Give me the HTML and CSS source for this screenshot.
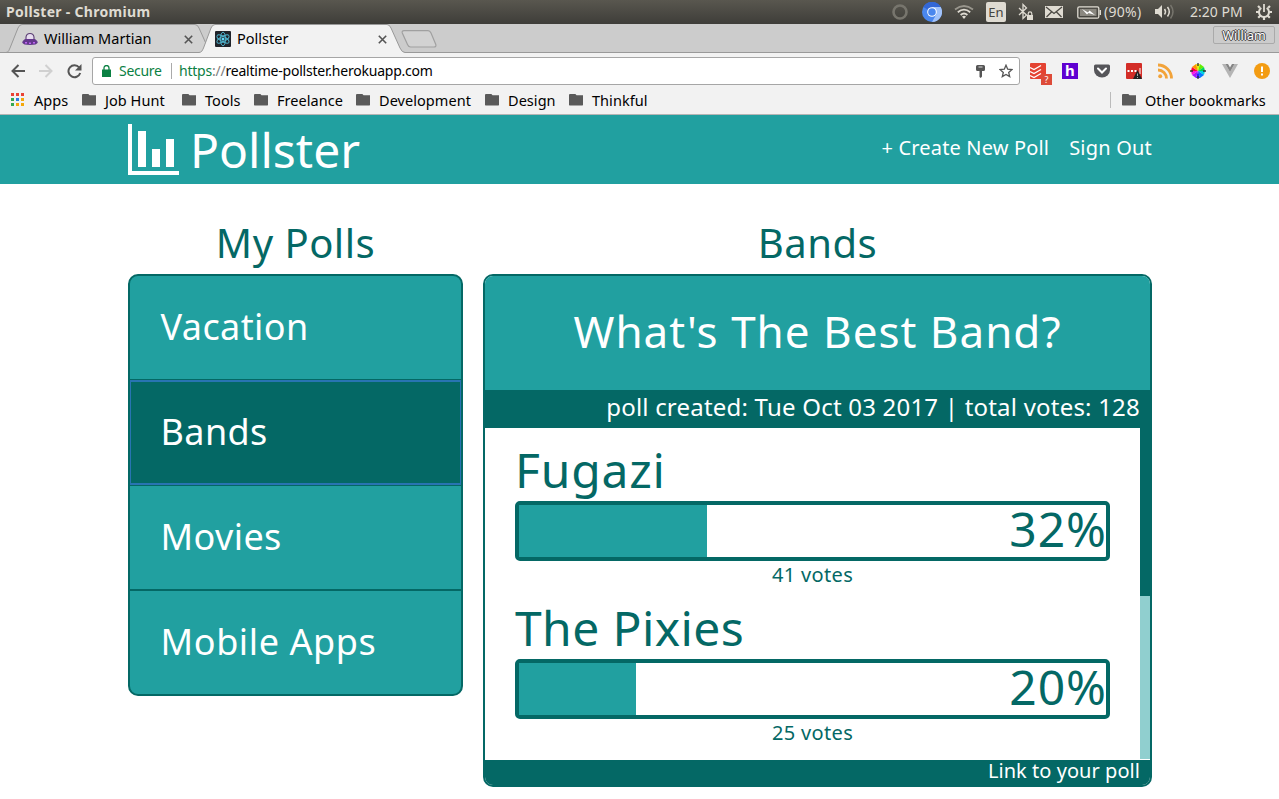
FILE: index.html
```html
<!DOCTYPE html>
<html lang="en">
<head>
<meta charset="utf-8">
<title>Pollster</title>
<link rel="stylesheet" href="styles.css">
</head>
<body>
<div class="titlebar">
  <span class="window-title">Pollster - Chromium</span>
  <div class="status">
    <svg width="16" height="16" viewBox="0 0 16 16"><circle cx="8" cy="8" r="6.5" fill="none" stroke="#77756d" stroke-width="2.6"/></svg>
    <svg width="20" height="20" viewBox="0 0 20 20"><circle cx="10" cy="10" r="10" fill="#4a87ee"/><path d="M10 10 1.3 5A10 10 0 0 1 18.7 5Z" fill="#3367d6"/><path d="M10 5h8.7A10 10 0 0 1 10 20l4.3-7.5Z" fill="#a1c2fa"/><circle cx="10" cy="10" r="4.8" fill="#fff"/><circle cx="10" cy="10" r="3.8" fill="#4a87ee"/></svg>
    <svg width="20" height="16" viewBox="0 0 20 16" fill="none" stroke="#dfdbd2" stroke-width="1.8"><path d="M1 5.5Q10-1.5 19 5.5" stroke="#99968d"/><path d="M3.8 8.3Q10 3 16.2 8.3"/><path d="M6.6 11Q10 8 13.4 11"/><path d="m8 12.5 2 2.5 2-2.5Q10 11 8 12.5Z" fill="#dfdbd2" stroke="none"/></svg>
    <span class="lang">En</span>
    <svg width="16" height="18" viewBox="0 0 16 18"><path d="m1 5 7.500 7L5 15.500V1.500L8.500 5 1 12" fill="none" stroke="#dfdbd2" stroke-width="1.300"/><path d="M9 12h6v5H9z" fill="#dfdbd2"/><path d="M10.200 12v-1.300a1.800 1.800 0 0 1 3.600 0V12" fill="none" stroke="#dfdbd2" stroke-width="1.200"/></svg>
    <svg width="18" height="12" viewBox="0 0 18 12"><path d="M0 0h18v12H0z" fill="#dfdbd2"/><path d="m1 1 8 6.500L17 1M1.500 11l5-5M16.500 11l-5-5" fill="none" stroke="#4b4943" stroke-width="1.300"/></svg>
    <svg width="25" height="13" viewBox="0 0 25 13"><rect x=".8" y=".8" width="21" height="11.400" rx="1.500" fill="none" stroke="#dfdbd2" stroke-width="1.300"/><path d="M3 3h16.500v7H3z" fill="#8b8880"/><path d="m5 3 6 3.500 1.500-2L18 9l-6.500-2-1.500 1.500Z" fill="#fff"/><path d="M22.500 4h1.500v5h-1.500z" fill="#dfdbd2"/></svg>
    <span class="battery-text">(90%)</span>
    <svg width="20" height="16" viewBox="0 0 20 16"><path d="M0 5h3l4-4v13l-4-4H0z" fill="#dfdbd2"/><g fill="none" stroke="#dfdbd2" stroke-width="1.500"><path d="M9.500 5q2 2.800 0 5.500"/><path d="M12.500 3q3.500 4.700 0 9.500"/><path d="M15.500 1q5 6.700 0 13.500" stroke="#77756d"/></g></svg>
    <span class="clock">2:20 PM</span>
    <svg width="16" height="16" viewBox="0 0 16 16" fill="none" stroke="#dfdbd2"><path d="M5.300 3.800a5 5 0 1 0 5.400 0" stroke-width="2"/><path d="M8 0v8" stroke-width="1.800"/><path d="M3.800 3.800 2 2M12.200 3.800 14 2M3 8H0M13 8h3M4.500 11.500 2.200 13.800M11.500 11.500l2.300 2.300M8 13v3" stroke-width="2.200"/></svg>
  </div>
</div>

<div class="tabstrip">
  <div class="tab">
    <svg class="tab-shape" width="206" height="29" viewBox="0 0 206 29"><path d="M.5 28.500C4 28 3.500 27 5 24L13 4Q14.500.5 17 .5H190Q192.500.5 194 4L205 28.500Z" fill="#d2d2d2" stroke="#999"/></svg>
    <svg class="tab-icon" width="16" height="16" viewBox="0 0 16 16"><path d="M4 8V6q.5-3.500 4-3.500T12 6v2" fill="#e6dcef" stroke="#5a3c72" stroke-width="1.100"/><path d="M3 8h10q3 2 2.800 3.500Q15 14 8 14T.2 11.500Q0 10 3 8Z" fill="#63378c"/><path d="M3 11h2v1.500H3zM7 11.500h2V13H7zM11 11h2v1.500h-2z" fill="#bd64f1"/></svg>
    <span class="tab-name first">William Martian</span>
    <svg class="tab-close" width="9" height="9" viewBox="0 0 9 9"><path d="m.8.8 7.400 7.400m0-7.400L.8 8.200" stroke="#555" stroke-width="1.600"/></svg>
  </div>
  <div class="tab active">
    <svg class="tab-shape" width="206" height="29" viewBox="0 0 206 29"><path d="M0 29V28.500C3 28 3 27 4.500 24L12 4Q13.500.5 16 .5H188Q190.500.5 192 4L201 24Q203 28.500 206 28.500V29Z" fill="#f2f2f2"/><path d="M0 28.500C3 28 3 27 4.500 24L12 4Q13.500.5 16 .5H188Q190.500.5 192 4L201 24Q203 28.500 206 28.500" fill="none" stroke="#999"/></svg>
    <svg class="tab-icon" width="16" height="16" viewBox="0 0 16 16"><rect width="16" height="16" rx="1" fill="#20232a"/><g fill="none" stroke="#4fb5cf" stroke-width=".9"><ellipse cx="8" cy="8" rx="2.600" ry="6.800"/><ellipse cx="8" cy="8" rx="2.600" ry="6.800" transform="rotate(60 8 8)"/><ellipse cx="8" cy="8" rx="2.600" ry="6.800" transform="rotate(120 8 8)"/></g><circle cx="8" cy="8" r="1.500" fill="#61dafb"/></svg>
    <span class="tab-name">Pollster</span>
    <svg class="tab-close" width="9" height="9" viewBox="0 0 9 9"><path d="m.8.8 7.400 7.400m0-7.400L.8 8.200" stroke="#555" stroke-width="1.600"/></svg>
  </div>
  <svg class="new-tab" width="36" height="18" viewBox="0 0 36 18"><path d="M3 .7H27Q29 .7 30 3L34.800 14.500Q35.500 17 33 17H9.500Q7.500 17 6.500 14.500L1.300 3Q.5.700 3 .7Z" fill="#d2d2d2" stroke="#a0a0a0" stroke-width="1.200"/></svg>
  <span class="profile">William</span>
</div>

<div class="toolbar">
  <div class="nav">
    <svg width="14" height="14" viewBox="0 0 14 14" fill="none" stroke="#555" stroke-width="2"><path d="M14 7H1.500M7.500 1 1.500 7l6 6"/></svg>
    <svg width="14" height="14" viewBox="0 0 14 14" fill="none" stroke="#d0d0d0" stroke-width="2"><path d="M0 7h12.500M6.500 1l6 6-6 6"/></svg>
    <svg width="15" height="15" viewBox="0 0 15 15"><path d="M12.200 3.500A6 6 0 1 0 13.200 9" fill="none" stroke="#555" stroke-width="2"/><path d="M14.500 0v6.500H8Z" fill="#555"/></svg>
  </div>
  <div class="omnibox">
    <svg class="lock" width="9" height="12" viewBox="0 0 9 12"><path d="M0 4.500h9V12H0z" fill="#0b8043"/><path d="M2 5V3a2.500 2.500 0 0 1 5 0v2" fill="none" stroke="#0b8043" stroke-width="1.300"/></svg>
    <span class="secure">Secure</span>
    <span class="url"><span class="https">https</span><span class="slashes">://</span>realtime-pollster.herokuapp.com</span>
    <svg class="key" width="9" height="13" viewBox="0 0 9 13"><path d="M1.500 0h6Q9 0 9 1.500v3Q9 6 7.500 6H6v5.500L4.800 13 3.500 12V6h-2Q0 6 0 4.500v-3Q0 0 1.500 0Z" fill="#555"/><path d="M2.500 1.500h4v1h-4z" fill="#ddd"/></svg>
    <svg class="star" width="14" height="14" viewBox="0 0 14 14"><path d="m7 1.200 1.700 4 4.300.4-3.300 2.800 1 4.200L7 10.400l-3.700 2.200 1-4.200L1 5.600l4.300-.4Z" fill="none" stroke="#555" stroke-width="1.300"/></svg>
  </div>
  <div class="extensions">
    <span class="todoist">
      <svg width="16" height="16" viewBox="0 0 16 16"><rect width="16" height="16" rx="1" fill="#e44332"/><path d="m0 4.500 4 2 7-4M0 8.500l4 2 7-4M0 12.500l4 2 7-4" fill="none" stroke="#fff" stroke-width="1.300"/></svg>
      <span class="ext-badge">?</span>
    </span>
    <span class="ext-h">h</span>
    <svg width="16" height="16" viewBox="0 0 16 16"><path d="M1.500 1.500h13Q16 1.500 16 3v4a8 7.500 0 0 1-16 0V3Q0 1.500 1.500 1.500Z" fill="#56565a"/><path d="m4 5.500 4 4 4-4" fill="none" stroke="#fff" stroke-width="2" stroke-linecap="round"/></svg>
    <svg width="16" height="16" viewBox="0 0 16 16"><rect width="16" height="16" rx="1" fill="#d32d27"/><path d="M1.500 7h2v2h-2zM5 7h2v2H5zM8.500 7h2v2h-2zM13.500 5h1v6h-1z" fill="#fff"/><path d="m11.500 7 4.500 9H7Z" fill="#222"/><path d="M11 10.500h1V13h-1zM11 14h1v1h-1z" fill="#aaa"/></svg>
    <svg width="16" height="16" viewBox="0 0 16 16"><circle cx="2.200" cy="13.200" r="2" fill="#f2a33a"/><path d="M0 7a8.500 8.500 0 0 1 8.500 8.500M0 2a13.500 13.500 0 0 1 13.500 13.500" fill="none" stroke="#f2a33a" stroke-width="2.800"/></svg>
    <svg width="16" height="16" viewBox="0 0 16 16"><path d="M8 8 6 1h4Z" fill="#e7f000"/><path d="m8 8 2-7 4 3Z" fill="#64ee00"/><path d="m8 8 6-4 1 4Z" fill="#00d35b"/><path d="m8 8 7 0-1 4Z" fill="#00d5df"/><path d="m8 8 6 4-4 3Z" fill="#007cff"/><path d="m8 8 2 7H6Z" fill="#291bff"/><path d="m8 8-2 7-4-3Z" fill="#a716ff"/><path d="M8 8 2 12 1 8Z" fill="#ff16dc"/><path d="M8 8H1l1-4Z" fill="#ff0040"/><path d="M8 8 2 4l4-3Z" fill="#ff9500"/><path d="M8 0v3M8 13v3M0 8h3M13 8h3" stroke="#333" stroke-width="1.300"/></svg>
    <svg width="16" height="14" viewBox="0 0 16 14"><path d="M0 0h3.500L8 8l4.500-8H16L8 14Z" fill="#b5b5b5"/><path d="M3.500 0H6l2 3.500L10 0h2.500L8 8Z" fill="#858585"/></svg>
    <svg width="16" height="16" viewBox="0 0 16 16"><circle cx="8" cy="8" r="8" fill="#f39c12"/><path d="M7 3.500h2v5.500H7zM7 10.500h2v2H7z" fill="#fff"/></svg>
  </div>
</div>

<div class="bookmarks">
  <span class="bookmark apps"><svg width="13" height="13" viewBox="0 0 13 13"><path d="M0 0h3v3H0zM5 0h3v3H5zM10 0h3v3h-3z" fill="#ea4335"/><path d="M0 5h3v3H0zM0 10h3v3H0z" fill="#34a853"/><path d="M5 5h3v3H5z" fill="#2f7de1"/><path d="M10 5h3v3h-3zM5 10h3v3H5zM10 10h3v3h-3z" fill="#f4a80b"/></svg>Apps</span>
  <span class="bookmark"><i class="folder"></i>Job Hunt</span>
  <span class="bookmark"><i class="folder"></i>Tools</span>
  <span class="bookmark"><i class="folder"></i>Freelance</span>
  <span class="bookmark"><i class="folder"></i>Development</span>
  <span class="bookmark"><i class="folder"></i>Design</span>
  <span class="bookmark"><i class="folder"></i>Thinkful</span>
  <span class="bookmark other"><i class="folder"></i>Other bookmarks</span>
</div>

<header class="site-header">
  <div class="brand">
    <svg width="51" height="51" viewBox="0 0 51 51" fill="#fff"><path d="M0 0h4v47h47v4H0zM10 7h8v36h-8zM24 25h8v18h-8zM38 15h8v28h-8z"/></svg>
    <span class="brand-name">Pollster</span>
  </div>
  <nav class="site-nav"><a class="create">+ Create New Poll</a><a class="signout">Sign Out</a></nav>
</header>

<main class="content">
  <section class="polls">
    <h2 class="heading">My Polls</h2>
    <ul class="poll-list">
      <li class="poll-item">Vacation</li>
      <li class="poll-item selected">Bands</li>
      <li class="poll-item">Movies</li>
      <li class="poll-item">Mobile Apps</li>
    </ul>
  </section>
  <section class="detail">
    <h2 class="heading">Bands</h2>
    <article class="card">
      <h3 class="question">What's The Best Band?</h3>
      <p class="meta">poll created: Tue Oct 03 2017 | total votes: 128</p>
      <div class="results">
        <div class="options">
          <div class="option">
            <div class="option-name fugazi">Fugazi</div>
            <div class="bar"><div class="fill" style="width:32%"></div><span class="percent">32%</span></div>
            <div class="votes">41 votes</div>
          </div>
          <div class="option">
            <div class="option-name">The Pixies</div>
            <div class="bar"><div class="fill" style="width:20%"></div><span class="percent">20%</span></div>
            <div class="votes">25 votes</div>
          </div>
        </div>
        <div class="scrollbar"><div class="thumb"></div></div>
      </div>
      <footer class="card-footer">Link to your poll</footer>
    </article>
  </section>
</main>
</body>
</html>
```

FILE: styles.css
```css
* { box-sizing: border-box; }
body {
  margin: 0;
  width: 1279px;
  height: 799px;
  overflow: hidden;
  background: #fff;
  font-family: "Noto Sans", "Open Sans", sans-serif;
}
svg { display: block; flex: none; }
h2, h3, p, ul { margin: 0; padding: 0; font-weight: 400; }

/* Desktop panel */
.titlebar {
  height: 24px;
  display: flex;
  align-items: center;
  justify-content: space-between;
  padding: 0 7px 0 6px;
  background: linear-gradient(#59574f, #3e3d39);
  color: #dfdbd2;
}
.window-title { font-size: 14px; font-weight: 700; letter-spacing: .3px; line-height: 24px; }
.status {
  display: grid;
  grid-template-columns: 30px 32px 32px 32px 27px 32px 27px 51px 35px 66px 16px;
  align-items: center;
  font-size: 14px;
  line-height: 24px;
  white-space: nowrap;
}
.battery-text { letter-spacing: .3px; }
.lang {
  width: 20px;
  height: 20px;
  border-radius: 2px;
  background: #dfdbd2;
  color: #45443f;
  font-size: 13px;
  line-height: 20px;
  text-align: center;
}

/* Tabs */
.tabstrip {
  height: 29px;
  display: flex;
  background: #ccc;
  border-bottom: 1px solid #999;
}
.tab {
  position: relative;
  z-index: 0;
  flex: none;
  display: flex;
  align-items: center;
  width: 206px;
  height: 29px;
  margin-left: 5px;
  padding: 1px 18px 0 17px;
  font-size: 14.500px;
}
.tab.active { margin-left: -12px; padding: 1px 18px 0 16px; z-index: 1; }
.tab-shape { position: absolute; left: 0; top: 0; z-index: -1; }
.tab-name { margin-left: 6px; flex: 1; line-height: 20px; padding-bottom: 2px; }
.tab-name.first { letter-spacing: .02px; }
.new-tab { margin: 6px 0 0 -4px; }
.profile {
  width: 62px;
  height: 18px;
  margin: 2px 4px 0 auto;
  border: 1px solid #aaa;
  border-radius: 2px;
  color: #fff;
  font-size: 12.500px;
  line-height: 17px;
  text-align: center;
  text-shadow: 1px 0 #444, -1px 0 #444, 0 1px #444, 0 -1px #444;
}

/* Toolbar */
.toolbar {
  height: 36px;
  display: flex;
  align-items: center;
  background: #f2f2f2;
}
.nav { display: flex; width: 92px; padding-left: 11px; gap: 14px; align-items: center; }
.omnibox {
  width: 928px;
  height: 28px;
  display: flex;
  align-items: center;
  padding: 0 6px 0 9px;
  background: #fff;
  border: 1px solid #a6a6a6;
  border-radius: 3px;
  font-size: 14px;
  line-height: 20px;
}
.secure {
  width: 60px;
  margin-left: 8px;
  background: linear-gradient(#aaa, #aaa) 52px 2px / 1px 16px no-repeat;
  color: #0b8043;
  letter-spacing: -.3px;
}
.url { flex: 1; letter-spacing: -.22px; }
.https { color: #0b8043; }
.slashes { color: #808080; }
.key { margin-right: 14px; }
.extensions {
  display: grid;
  grid-template-columns: repeat(8, 32px);
  align-items: center;
  margin-left: 10px;
  width: 249px;
}
.todoist { position: relative; }
.ext-badge {
  position: absolute;
  left: 11px;
  top: 11px;
  width: 11px;
  height: 11px;
  background: #dd4b39;
  color: #fff;
  font-size: 9px;
  line-height: 11px;
  text-align: center;
}
.ext-h {
  width: 16px;
  height: 16px;
  background: #5f01d1;
  color: #fff;
  font-size: 15px;
  font-weight: 700;
  line-height: 15px;
  text-align: center;
}

/* Bookmarks */
.bookmarks {
  height: 26px;
  display: grid;
  grid-template-columns: 71px 100px 72px 102px 129px 84px 541px 158px;
  align-items: center;
  padding: 0 0 4px 11px;
  background: #f2f2f2;
  border-bottom: 1px solid #b5b5b5;
  font-size: 14.500px;
  line-height: 20px;
}
.bookmark { display: flex; align-items: center; gap: 9px; white-space: nowrap; letter-spacing: .05px; }
.bookmark.apps { gap: 10px; }
.folder {
  width: 14px;
  height: 12px;
  background: #5a5a5a;
  border-radius: 1px;
  clip-path: polygon(0 0, 42% 0, 54% 15%, 100% 15%, 100% 100%, 0 100%);
}
.other { border-left: 1px solid #bbb; height: 16px; padding-left: 11px; }

/* Site header */
.site-header {
  height: 69px;
  display: flex;
  justify-content: space-between;
  padding: 0 127px 0 128px;
  background: #21a0a0;
  color: #fff;
}
.brand { display: flex; align-items: center; gap: 11px; }
.brand-name { font-size: 48px; line-height: 68px; }
.site-nav { display: flex; gap: 20px; font-size: 20px; line-height: 66px; }
.create { letter-spacing: .16px; }
.signout { letter-spacing: .2px; }

/* Polls */
.content {
  display: grid;
  grid-template-columns: 335px 669px;
  column-gap: 20px;
  padding: 24px 127px 0 128px;
  align-items: start;
}
.heading {
  height: 66px;
  padding-top: 2px;
  color: #046865;
  font-size: 40px;
  line-height: 66px;
  letter-spacing: .5px;
  text-align: center;
}
.poll-list {
  list-style: none;
  border: 2px solid #046865;
  border-radius: 10px;
  overflow: hidden;
  background: #21a0a0;
}
.poll-item {
  position: relative;
  height: 105px;
  padding-left: 30.500px;
  border-bottom: 2px solid #046865;
  color: #fff;
  font-size: 36px;
  line-height: 102px;
  letter-spacing: .4px;
}
.poll-item:last-child { height: 103px; border: 0; letter-spacing: .6px; }
.poll-item.selected { background: #046865; }
.poll-item.selected::after {
  content: "";
  position: absolute;
  inset: -1px 0;
  border: solid #2874b2;
  border-width: 2px 1px;
}

/* Selected poll */
.card {
  height: 513px;
  border: 2px solid #046865;
  border-radius: 10px;
  overflow: hidden;
  background: #fff;
}
.question {
  height: 114px;
  background: #21a0a0;
  color: #fff;
  font-size: 44px;
  line-height: 111px;
  letter-spacing: 1px;
  text-align: center;
}
.meta {
  height: 38px;
  padding-right: 10px;
  background: #046865;
  color: #fff;
  font-size: 24px;
  line-height: 34px;
  letter-spacing: .21px;
  text-align: right;
}
.results { display: flex; height: 332px; }
.options { flex: 1; padding: 7px 30px 0; }
.option { height: 158px; color: #046865; }
.option-name { height: 66px; padding-top: 2px; font-size: 48px; line-height: 66px; letter-spacing: .4px; }
.option-name.fugazi { letter-spacing: .8px; }
.bar {
  height: 60px;
  display: flex;
  justify-content: space-between;
  border: 4px solid #046865;
  border-radius: 5px;
}
.fill { background: #21a0a0; }
.percent { font-size: 48px; line-height: 48px; letter-spacing: 1px; margin-right: -1px; }
.votes { font-size: 20px; line-height: 28px; letter-spacing: .35px; text-align: center; }
.scrollbar { width: 10px; height: 331px; background: #90cfcf; }
.thumb { height: 168px; background: #046865; }
.card-footer {
  height: 25px;
  padding-right: 10px;
  background: #046865;
  color: #fff;
  font-size: 20px;
  line-height: 21px;
  letter-spacing: .05px;
  text-align: right;
}
```
